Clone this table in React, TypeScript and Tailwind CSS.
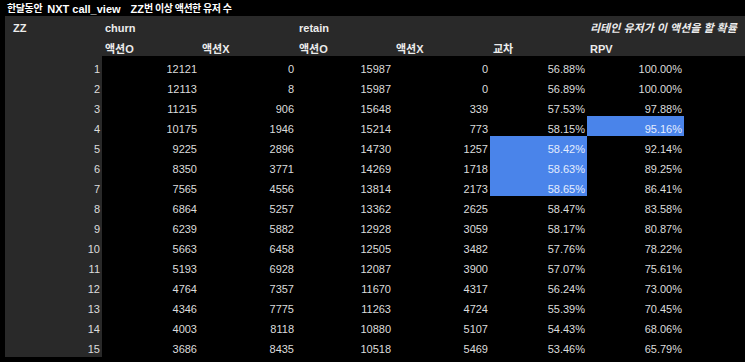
import React from "react";

const rows: string[][] = [
  ["1", "12121", "0", "15987", "0", "56.88%", "100.00%"],
  ["2", "12113", "8", "15987", "0", "56.89%", "100.00%"],
  ["3", "11215", "906", "15648", "339", "57.53%", "97.88%"],
  ["4", "10175", "1946", "15214", "773", "58.15%", "95.16%"],
  ["5", "9225", "2896", "14730", "1257", "58.42%", "92.14%"],
  ["6", "8350", "3771", "14269", "1718", "58.63%", "89.25%"],
  ["7", "7565", "4556", "13814", "2173", "58.65%", "86.41%"],
  ["8", "6864", "5257", "13362", "2625", "58.47%", "83.58%"],
  ["9", "6239", "5882", "12928", "3059", "58.17%", "80.87%"],
  ["10", "5663", "6458", "12505", "3482", "57.76%", "78.22%"],
  ["11", "5193", "6928", "12087", "3900", "57.07%", "75.61%"],
  ["12", "4764", "7357", "11670", "4317", "56.24%", "73.00%"],
  ["13", "4346", "7775", "11263", "4724", "55.39%", "70.45%"],
  ["14", "4003", "8118", "10880", "5107", "54.43%", "68.06%"],
  ["15", "3686", "8435", "10518", "5469", "53.46%", "65.79%"],
];

// highlighted cells: [row index, col index]
const isBlue = (r: number, c: number) =>
  (r === 3 && c === 6) || (c === 5 && r >= 4 && r <= 6);

const HeadCell = ({ children, className = "" }: { children?: React.ReactNode; className?: string }) => (
  <div className={`w-[97px] h-5 shrink-0 flex items-end px-[3px] leading-[14px] font-bold text-[#ececec] whitespace-nowrap ${className}`}>
    {children}
  </div>
);

export default function App() {
  return (
    <div className="w-[745px] h-[362px] bg-black overflow-hidden text-[11px] text-[#dcdcdc] font-['Liberation_Sans','Noto_Sans_CJK_KR',sans-serif]">
      <div className="h-4 pl-[7px] pt-[1px] leading-[14px] font-bold text-white whitespace-pre flex items-center">
        <span className="text-[10px] tracking-[-0.4px]">한달동안</span>
        <span className="ml-[5px]">NXT call_view</span>
        <span className="ml-[10px]">ZZ</span>
        <span className="text-[10px] tracking-[-0.5px]">번 이상 액션한 유저 수</span>
      </div>

      <div className="ml-[5px]">
        <div className="bg-[#292929]">
          <div className="flex">
            <HeadCell className="pl-2 pb-[1px]">ZZ</HeadCell>
            <HeadCell className="pb-[1px]">churn</HeadCell>
            <HeadCell />
            <HeadCell className="pb-[1px]">retain</HeadCell>
            <HeadCell />
            <HeadCell />
            <HeadCell className="overflow-visible pb-[1px]">
              <span className="italic">리테인 유저가 이 액션을 할 확률</span>
            </HeadCell>
          </div>
          <div className="flex">
            <HeadCell />
            <HeadCell>액션O</HeadCell>
            <HeadCell>액션X</HeadCell>
            <HeadCell>액션O</HeadCell>
            <HeadCell>액션X</HeadCell>
            <HeadCell>교차</HeadCell>
            <HeadCell>RPV</HeadCell>
          </div>
        </div>

        {rows.map((row, r) => (
          <div key={r} className="flex">
            {row.map((v, c) => (
              <div
                key={c}
                className={`w-[97px] h-5 shrink-0 flex items-end justify-end pr-[2px] leading-[14px] ${
                  c === 0 ? "bg-[#292929]" : ""
                } ${isBlue(r, c) ? "bg-[#4a84ea] text-[#e4edff]" : ""}`}
              >
                {v}
              </div>
            ))}
          </div>
        ))}
        <div className="w-[97px] h-[1px] bg-[#292929]" />
      </div>
    </div>
  );
}
